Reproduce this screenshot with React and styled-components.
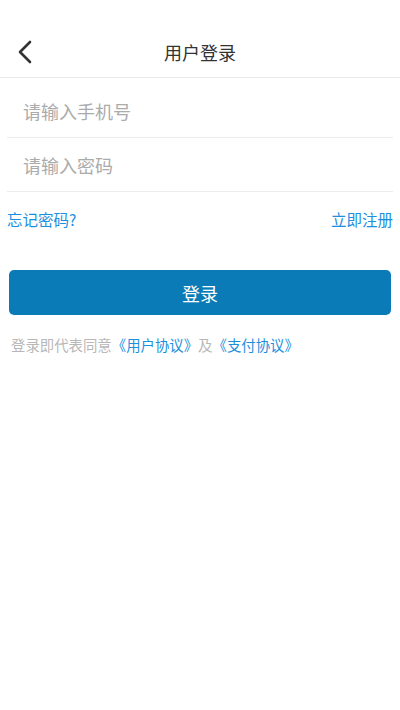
import React from "react";
import styled, { createGlobalStyle } from "styled-components";

const Global = createGlobalStyle`
  html, body { margin: 0; padding: 0; background: #fff; }
  body { font-family: "Noto Sans CJK SC", "Noto Sans", sans-serif; }
  * { box-sizing: border-box; }
`;

const Page = styled.div`
  width: 400px;
  min-height: 710px;
  background: #fff;
  display: flex;
  flex-direction: column;
`;

const Header = styled.header`
  position: relative;
  height: 78px;
  padding-top: 26px;
  border-bottom: 1px solid #e9e9e9;
  display: flex;
  align-items: center;
  justify-content: center;
`;

const BackButton = styled.button`
  position: absolute;
  left: 12px;
  top: 37px;
  width: 26px;
  height: 30px;
  padding: 0;
  border: none;
  background: transparent;
  display: flex;
  align-items: center;
  justify-content: center;
`;

const Title = styled.h1`
  margin: 0;
  height: 50px;
  line-height: 50px;
  font-size: 18px;
  font-weight: 400;
  color: #333;
`;

const Form = styled.div`
  margin-top: 6px;
  padding: 0 7px;
  display: flex;
  flex-direction: column;
`;

const Field = styled.div`
  height: 54px;
  border-bottom: 1px solid #ececec;
  display: flex;
  align-items: center;
  padding-left: 16px;
`;

const Input = styled.input`
  border: none;
  outline: none;
  width: 100%;
  font-family: inherit;
  font-size: 18px;
  color: #333;
  background: transparent;
  padding: 0;
  &::placeholder { color: #ababab; }
`;

const LinkRow = styled.div`
  margin-top: 16px;
  padding: 0 7px;
  height: 21px;
  display: flex;
  justify-content: space-between;
  align-items: center;
`;

const TextLink = styled.a`
  font-size: 15.5px;
  color: ${(p) => p.$color || "#1c8fdd"};
  text-decoration: none;
`;

const LoginButton = styled.button`
  margin: 41px 9px 0;
  height: 45px;
  border: none;
  border-radius: 5px;
  background: #0a7bb7;
  color: #fff;
  font-family: inherit;
  font-size: 18px;
`;

const Agreement = styled.p`
  margin: 20px 0 0;
  padding-left: 11px;
  font-size: 14.4px;
  line-height: 20px;
  color: #b8b8b8;
`;

const Blue = styled.span`
  color: #1c8fdd;
`;

export default function App() {
  return (
    <Page>
      <Global />
      <Header>
        <BackButton aria-label="返回">
          <svg width="26" height="30" viewBox="0 0 26 30">
            <path d="M18 5 L8 15 L18 25" fill="none" stroke="#333" strokeWidth="2.6" strokeLinecap="round" strokeLinejoin="round" />
          </svg>
        </BackButton>
        <Title>用户登录</Title>
      </Header>
      <Form>
        <Field><Input placeholder="请输入手机号" /></Field>
        <Field><Input type="password" placeholder="请输入密码" /></Field>
      </Form>
      <LinkRow>
        <TextLink>忘记密码?</TextLink>
        <TextLink>立即注册</TextLink>
      </LinkRow>
      <LoginButton>登录</LoginButton>
      <Agreement>
        登录即代表同意<Blue>《用户协议》</Blue>及<Blue>《支付协议》</Blue>
      </Agreement>
    </Page>
  );
}
